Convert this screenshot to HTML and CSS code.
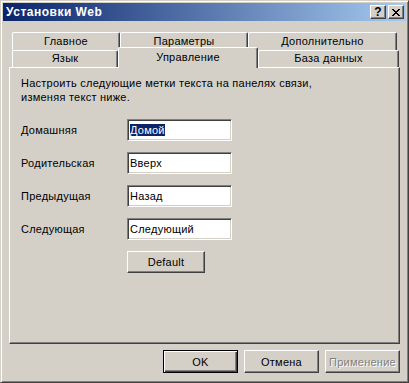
FILE: index.html
```html
<!DOCTYPE html>
<html lang="ru">
<head>
    <meta charset="UTF-8">
    <title>Установки Web</title>
    <link rel="stylesheet" href="styles.css">
</head>
<body>
    <div class="window">
        <div class="titlebar">
            <span class="title">Установки Web</span>
            <div class="caption-buttons">
                <span class="caption-btn help">?</span>
                <span class="caption-btn close">
                    <svg width="8" height="7" viewBox="0 0 8 7" shape-rendering="crispEdges">
                        <path d="M0 0h2v1h-2zM6 0h2v1h-2zM1 1h2v1h-2zM5 1h2v1h-2zM2 2h4v1h-4zM3 3h2v1h-2zM2 4h4v1h-4zM1 5h2v1h-2zM5 5h2v1h-2zM0 6h2v1h-2zM6 6h2v1h-2z" fill="#000"/>
                    </svg>
                </span>
            </div>
        </div>
        <div class="content">
            <div class="tabs">
                <div class="tab-row back">
                    <div class="tab tab-main">Главное</div>
                    <div class="tab tab-params">Параметры</div>
                    <div class="tab tab-extra">Дополнительно</div>
                </div>
                <div class="tab-row front">
                    <div class="tab tab-lang">Язык</div>
                    <div class="tab tab-control selected">Управление</div>
                    <div class="tab tab-db">База данных</div>
                </div>
            </div>
            <div class="panel">
                <p class="intro">Настроить следующие метки текста на панелях связи,<br>изменяя текст ниже.</p>
                <div class="field">
                    <label class="field-label">Домашняя</label>
                    <div class="textbox"><span class="selection">Домой</span></div>
                </div>
                <div class="field">
                    <label class="field-label">Родительская</label>
                    <div class="textbox">Вверх</div>
                </div>
                <div class="field">
                    <label class="field-label">Предыдущая</label>
                    <div class="textbox">Назад</div>
                </div>
                <div class="field">
                    <label class="field-label">Следующая</label>
                    <div class="textbox">Следующий</div>
                </div>
                <div class="field">
                    <span class="field-label"></span>
                    <button class="btn btn-default-values">Default</button>
                </div>
            </div>
            <div class="dialog-buttons">
                <button class="btn default">OK</button>
                <button class="btn">Отмена</button>
                <button class="btn disabled">Применение</button>
            </div>
        </div>
    </div>
</body>
</html>
```

FILE: styles.css
```css
body {
    margin: 0;
    font-family: "Liberation Sans", Arial, sans-serif;
    font-size: 11px;
    letter-spacing: 0.25px;
    color: #000;
    background: #d4d0c8;
}
.window {
    width: 409px;
    height: 383px;
    box-sizing: border-box;
    display: flex;
    flex-direction: column;
    background: #d4d0c8;
    border: 1px solid;
    border-color: #d4d0c8 #404040 #404040 #d4d0c8;
    box-shadow: inset 1px 1px #fff, inset -1px -1px #808080;
    padding: 2px;
}
.titlebar {
    height: 18px;
    display: flex;
    align-items: center;
    justify-content: space-between;
    background: linear-gradient(to right, #0a246a, #a6caf0);
    padding: 0 2px 0 3px;
}
.title {
    color: #fff;
    font-weight: bold;
    font-size: 12px;
    letter-spacing: 0.5px;
}
.caption-buttons {
    display: flex;
    gap: 2px;
}
.caption-btn {
    width: 16px;
    height: 14px;
    box-sizing: border-box;
    display: flex;
    align-items: center;
    justify-content: center;
    background: #d4d0c8;
    border: 1px solid;
    border-color: #fff #404040 #404040 #fff;
    box-shadow: inset -1px -1px #808080;
    font-weight: bold;
    font-size: 12px;
    letter-spacing: 0;
    line-height: 1;
}
.content {
    flex: 1;
    display: flex;
    flex-direction: column;
    padding: 11px 6px 7px 6px;
}
.tabs {
    display: flex;
    flex-direction: column;
    padding-left: 3px;
}
.tab-row {
    display: flex;
}
.tab-row.back {
    height: 18px;
}
.tab-row.front {
    height: 17px;
}
.tab {
    box-sizing: border-box;
    display: flex;
    justify-content: center;
    padding-top: 2px;
    border-top: 1px solid #fff;
    border-left: 1px solid #fff;
    border-right: 1px solid #404040;
    box-shadow: inset -1px 0 #808080;
    border-radius: 2px 2px 0 0;
    background: #d4d0c8;
}
.tab-row.front .tab {
    padding-top: 1px;
}
.tab-main { width: 108px; }
.tab-params { width: 128px; }
.tab-extra { width: 149px; }
.tab-lang { width: 106px; }
.tab-control { width: 140px; }
.tab-db { width: 141px; }
.tab-row.front .tab.selected {
    margin-top: -3px;
    height: 21px;
    padding-top: 3px;
    z-index: 1;
}
.panel {
    flex: 1;
    border: 1px solid;
    border-color: #fff #404040 #404040 #fff;
    box-shadow: inset -1px -1px #808080;
    padding: 8px 11px 0 11px;
}
.intro {
    margin: 0 0 15px 0;
    line-height: 14px;
}
.field {
    display: flex;
    align-items: center;
    margin-bottom: 11px;
}
.field-label {
    width: 106px;
}
.textbox {
    width: 105px;
    height: 22px;
    box-sizing: border-box;
    background: #fff;
    border: 1px solid;
    border-color: #808080 #fff #fff #808080;
    box-shadow: inset 1px 1px #404040, inset -1px -1px #d4d0c8;
    padding: 3px 0 0 2px;
    line-height: 14px;
}
.selection {
    background: #0a246a;
    color: #fff;
}
.btn {
    box-sizing: border-box;
    width: 75px;
    height: 23px;
    padding: 0;
    font: inherit;
    letter-spacing: inherit;
    color: #000;
    background: #d4d0c8;
    border: 1px solid;
    border-color: #fff #404040 #404040 #fff;
    box-shadow: inset -1px -1px #808080;
}
.btn-default-values {
    width: 78px;
    height: 22px;
}
.btn.default {
    border: 1px solid #000;
    box-shadow: inset 1px 1px #fff, inset -1px -1px #404040, inset -2px -2px #808080;
}
.btn.disabled {
    color: #808080;
    text-shadow: 1px 1px #fff;
}
.dialog-buttons {
    display: flex;
    justify-content: flex-end;
    gap: 6px;
    padding-top: 6px;
}
```
